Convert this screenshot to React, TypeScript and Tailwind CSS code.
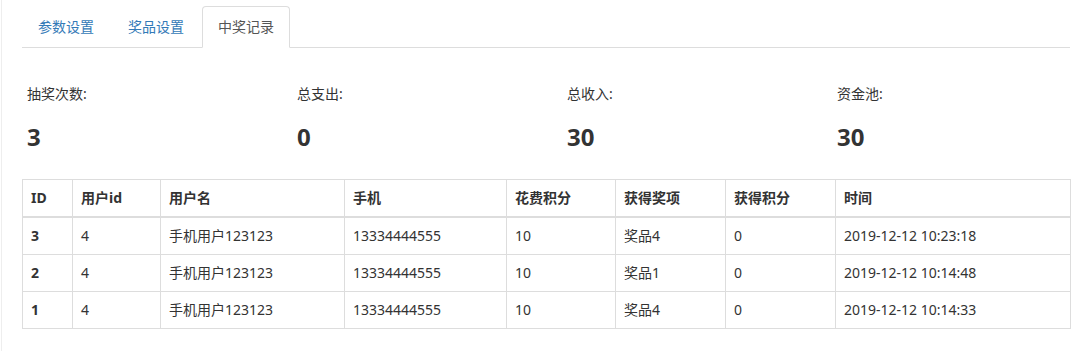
import React from "react";

const font = { fontFamily: '"Noto Sans", "Noto Sans CJK SC", sans-serif' };

const stats = [
  { label: "抽奖次数:", value: "3" },
  { label: "总支出:", value: "0" },
  { label: "总收入:", value: "30" },
  { label: "资金池:", value: "30" },
];

const headers = ["ID", "用户id", "用户名", "手机", "花费积分", "获得奖项", "获得积分", "时间"];
const widths = [50, 88, 184, 162, 109, 110, 110, 235];

const rows = [
  ["3", "4", "手机用户123123", "13334444555", "10", "奖品4", "0", "2019-12-12 10:23:18"],
  ["2", "4", "手机用户123123", "13334444555", "10", "奖品1", "0", "2019-12-12 10:14:48"],
  ["1", "4", "手机用户123123", "13334444555", "10", "奖品4", "0", "2019-12-12 10:14:33"],
];

export default function App() {
  return (
    <div className="w-[1079px] h-[351px] bg-white pl-px text-[14px] leading-5 text-[#333]" style={font}>
      <div className="h-[351px] border-l border-[#eeeeee] pl-[20px]">
        <div className="w-[1048px] pt-[6px]">
          <ul className="flex border-b border-[#dddddd]">
            {["参数设置", "奖品设置", "中奖记录"].map((t, i) => (
              <li key={t} className="-mb-px mr-[2px]">
                <a
                  className={
                    i === 2
                      ? "block px-[15px] py-[10px] leading-5 border border-[#dddddd] border-b-white rounded-t-[4px] bg-white text-[#555555]"
                      : "block px-[15px] py-[10px] leading-5 border border-transparent rounded-t-[4px] text-[#337ab7]"
                  }
                >
                  {t}
                </a>
              </li>
            ))}
          </ul>

          <div className="grid grid-cols-[270px_270px_270px_238px] pl-[5px] mt-[36px]">
            {stats.map((s) => (
              <div key={s.label}>
                <div className="leading-5">{s.label}</div>
                <div className="mt-[20px] text-[24px] leading-[26px] font-bold">{s.value}</div>
              </div>
            ))}
          </div>

          <table className="mt-[29px] w-[1048px] table-fixed border-collapse border border-[#dddddd]">
            <colgroup>
              {widths.map((w, i) => (
                <col key={i} style={{ width: w }} />
              ))}
            </colgroup>
            <thead>
              <tr>
                {headers.map((h) => (
                  <th key={h} className="text-left font-bold px-2 py-2 leading-5 border border-[#dddddd] border-b-2">
                    {h}
                  </th>
                ))}
              </tr>
            </thead>
            <tbody>
              {rows.map((r) => (
                <tr key={r[0]}>
                  {r.map((c, j) => (
                    <td key={j} className={"px-2 py-2 leading-5 border border-[#dddddd]" + (j === 0 ? " font-bold" : "")}>
                      {c}
                    </td>
                  ))}
                </tr>
              ))}
            </tbody>
          </table>
        </div>
      </div>
    </div>
  );
}
